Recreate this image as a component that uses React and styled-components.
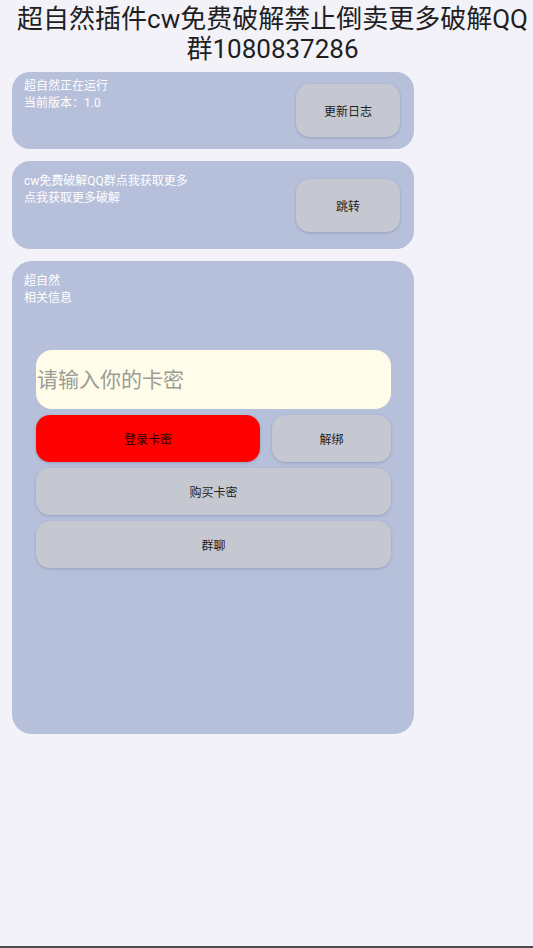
import React from "react";
import styled, { createGlobalStyle } from "styled-components";

const Global = createGlobalStyle`
  html, body { margin: 0; padding: 0; background: #f4f2f9; }
  body { font-family: Roboto, "Noto Sans CJK SC", "Noto Sans", sans-serif; }
  * { box-sizing: border-box; }
`;

const Page = styled.div`
  min-height: 948px;
  display: flex;
  flex-direction: column;
  background: #f4f2f9;
`;

const Title = styled.h1`
  margin: 0;
  padding: 4px 0 0 12px;
  font-size: 26px;
  line-height: 30px;
  font-weight: 400;
  color: #1f1f1f;
  text-align: center;
`;

const Cards = styled.div`
  display: flex;
  flex-direction: column;
  gap: 12px;
  width: 402px;
  margin: 8px 0 0 12px;
`;

const Card = styled.section`
  display: flex;
  justify-content: space-between;
  align-items: flex-start;
  background: #b7c0da;
  border-radius: ${(p) => p.$radius || 18}px;
  padding: ${(p) => p.$pad};
  min-height: ${(p) => p.$h || 0}px;
`;

const ColumnCard = styled(Card)`
  flex-direction: column;
  justify-content: flex-start;
  align-items: stretch;
`;

const Info = styled.div`
  font-size: 12px;
  line-height: 17px;
  color: #ffffff;
`;

const Button = styled.button`
  border: none;
  font-family: inherit;
  font-size: 12px;
  color: ${(p) => p.$ink || "#222"};
  background: ${(p) => p.$bg || "#c6c8d1"};
  border-radius: ${(p) => p.$radius || 14}px;
  height: ${(p) => p.$h || 47}px;
  width: ${(p) => (p.$w ? `${p.$w}px` : "100%")};
  margin-top: ${(p) => p.$mt || 0}px;
  box-shadow: 0 1px 3px rgba(90, 100, 130, 0.35);
  padding: 0;
  flex-shrink: 0;
`;

const Panel = styled.div`
  display: flex;
  flex-direction: column;
  gap: 6px;
  margin: 43px 23px 0 12px;
`;

const Input = styled.input`
  height: 59px;
  width: 100%;
  border: none;
  outline: none;
  border-radius: 16px;
  background: #fffdea;
  font-family: inherit;
  font-size: 21px;
  color: #333;
  padding: 0 0 0 1px;
  &::placeholder { color: #9c9c96; }
`;

const Row = styled.div`
  display: grid;
  grid-template-columns: 224px 1fr;
  gap: 12px;
`;

const BottomBar = styled.div`
  margin-top: auto;
  height: 2px;
  background: #4c4c4c;
`;

export default function App() {
  return (
    <Page>
      <Global />
      <Title>
        超自然插件cw免费破解禁止倒卖更多破解QQ
        <br />
        群1080837286
      </Title>
      <Cards>
        <Card $pad="6px 14px 12px 12px" $h={77}>
          <Info>
            超自然正在运行
            <br />
            当前版本：1.0
          </Info>
          <Button $w={104} $h={53} $mt={6}>更新日志</Button>
        </Card>
        <Card $pad="12px 14px 17px 12px" $h={88}>
          <Info>
            cw免费破解QQ群点我获取更多
            <br />
            点我获取更多破解
          </Info>
          <Button $w={104} $h={53} $mt={6}>跳转</Button>
        </Card>
        <ColumnCard $pad="12px 0 0 12px" $h={473} $radius={20}>
          <Info>
            超自然
            <br />
            相关信息
          </Info>
          <Panel>
            <Input placeholder="请输入你的卡密" />
            <Row>
              <Button $bg="#ff0000" $ink="#2a0000">登录卡密</Button>
              <Button>解绑</Button>
            </Row>
            <Button>购买卡密</Button>
            <Button>群聊</Button>
          </Panel>
        </ColumnCard>
      </Cards>
      <BottomBar />
    </Page>
  );
}
